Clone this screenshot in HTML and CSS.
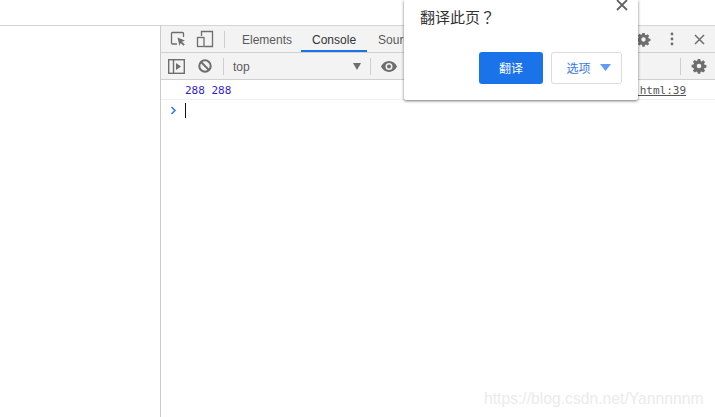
FILE: index.html
```html
<!DOCTYPE html>
<html lang="zh">
<head>
<meta charset="utf-8">
<title>Console</title>
<link rel="stylesheet" href="styles.css">
</head>
<body>
<div class="top"></div>
<div class="main">
  <div class="page"></div>
  <div class="devtools">
    <div class="tabs">
      <svg class="ic ic-insp" width="18" height="18" viewBox="0 0 18 18"><path d="M8 14H3.500a1 1 0 0 1-1-1V3.500a1 1 0 0 1 1-1h10a1 1 0 0 1 1 1V7" fill="none" stroke="#6e6e6e" stroke-width="1.300"/><path d="M8.500 7.500l7.500 3-3 1.200 2.800 2.800-1.300 1.300-2.800-2.800-1.200 3z" fill="#6e6e6e"/></svg>
      <svg class="ic ic-dev" width="18" height="18" viewBox="0 0 18 18"><path d="M5.500 6V1.500h11v15h-8" fill="none" stroke="#6e6e6e" stroke-width="1.300"/><rect x="1.500" y="7.500" width="6.500" height="9" fill="none" stroke="#6e6e6e" stroke-width="1.300"/></svg>
      <span class="sep tab-sep"></span>
      <span class="tab">Elements</span>
      <span class="tab active">Console</span>
      <span class="tab">Sources</span>
      <span class="fill"></span>
      <svg class="ic gear1" width="15" height="15" viewBox="0 0 16 16"><path class="gear" d="M6.700 1h2.600l.3 1.900 1.100.5 1.600-1.100 1.800 1.800-1.100 1.600.5 1.100 1.900.3v2.600l-1.900.3-.5 1.100 1.100 1.600-1.800 1.800-1.600-1.100-1.100.5-.3 1.900H6.700l-.3-1.900-1.100-.5-1.600 1.100-1.800-1.800 1.100-1.600-.5-1.100L.6 9.300V6.700l1.900-.3.5-1.100-1.100-1.600 1.800-1.800 1.600 1.100 1.100-.5zM8 5.700a2.300 2.300 0 1 0 0 4.600 2.300 2.300 0 0 0 0-4.600z"/></svg>
      <svg class="ic dots" width="4" height="14" viewBox="0 0 4 14"><circle cx="2" cy="2" r="1.400" fill="#6e6e6e"/><circle cx="2" cy="7" r="1.400" fill="#6e6e6e"/><circle cx="2" cy="12" r="1.400" fill="#6e6e6e"/></svg>
      <svg class="ic close1" width="11" height="11" viewBox="0 0 11 11"><path d="M1 1l9 9M10 1l-9 9" stroke="#6e6e6e" stroke-width="1.500"/></svg>
    </div>
    <div class="bar">
      <svg class="ic ic-side" width="17" height="15" viewBox="0 0 17 15"><rect x=".7" y=".7" width="15.600" height="13.600" fill="none" stroke="#6e6e6e" stroke-width="1.400"/><path d="M5.500 1v13" stroke="#6e6e6e" stroke-width="1.400"/><path d="M8 4l5 3.500L8 11z" fill="#6e6e6e"/></svg>
      <svg class="ic ic-block" width="14" height="14" viewBox="0 0 14 14"><circle cx="7" cy="7" r="5.700" fill="none" stroke="#6e6e6e" stroke-width="2"/><path d="M3 3l8 8" stroke="#6e6e6e" stroke-width="2"/></svg>
      <span class="sep"></span>
      <span class="ctx">top</span>
      <svg class="caret" width="8" height="7" viewBox="0 0 8 7"><path d="M0 0h8L4 7z" fill="#6e6e6e"/></svg>
      <span class="sep"></span>
      <svg class="ic ic-eye" width="16" height="11" viewBox="0 0 16 11"><path d="M8 0C4.500 0 1.500 2.200 0 5.500 1.500 8.800 4.500 11 8 11s6.500-2.200 8-5.500C14.500 2.200 11.500 0 8 0zm0 9a3.500 3.500 0 1 1 0-7 3.500 3.500 0 0 1 0 7zm0-5.500a2 2 0 1 0 0 4 2 2 0 0 0 0-4z" fill="#6e6e6e"/></svg>
      <span class="fill"></span>
      <span class="sep"></span>
      <svg class="ic gear2" width="16" height="16" viewBox="0 0 16 16"><path class="gear" d="M6.700 1h2.600l.3 1.900 1.100.5 1.600-1.100 1.800 1.800-1.100 1.600.5 1.100 1.900.3v2.600l-1.900.3-.5 1.100 1.100 1.600-1.800 1.800-1.600-1.100-1.100.5-.3 1.900H6.700l-.3-1.900-1.100-.5-1.600 1.100-1.800-1.800 1.100-1.600-.5-1.100L.6 9.300V6.700l1.900-.3.5-1.100-1.100-1.600 1.800-1.800 1.600 1.100 1.100-.5zM8 5.700a2.300 2.300 0 1 0 0 4.600 2.300 2.300 0 0 0 0-4.600z"/></svg>
    </div>
    <div class="log">
      <span class="val">288 288</span>
      <span class="src">index.html:39</span>
    </div>
    <div class="prompt">
      <svg width="7" height="9" viewBox="0 0 7 9"><path d="M1.500 1l3.500 3.500L1.500 8" fill="none" stroke="#367cf1" stroke-width="1.600"/></svg>
      <span class="cursor"></span>
    </div>
  </div>
</div>
<div class="bubble">
  <svg class="bubble-x" width="12" height="12" viewBox="0 0 12 12"><path d="M1 1l10 10M11 1L1 11" stroke="#5f6368" stroke-width="1.800"/></svg>
  <div class="title">翻译此页<span class="qm" lang="zh-TW">？</span></div>
  <div class="actions">
    <span class="btn primary">翻译</span>
    <span class="btn option">选项<svg class="opt-caret" width="11" height="7" viewBox="0 0 11 7"><path d="M0 0h11L5.500 7z" fill="#5f9cf5"/></svg></span>
  </div>
</div>
<div class="mark">https://blog.csdn.net/Yannnnnm</div>
</body>
</html>
```
FILE: styles.css
```css
* { box-sizing: border-box; }
html, body { margin: 0; height: 100%; overflow: hidden; background: #fff; }
body { position: relative; display: flex; flex-direction: column; width: 715px; height: 417px; font-family: "Liberation Sans", sans-serif; }
.top { height: 26px; flex: none; background: #fff; border-bottom: 1px solid #d4d4d4; }
.main { flex: 1; display: flex; min-height: 0; }
.page { width: 160px; flex: none; background: #fff; }
.devtools { flex: 1; border-left: 1px solid #cbcbcb; display: flex; flex-direction: column; min-width: 0; }
.tabs, .bar { display: flex; align-items: center; background: #f3f3f3; border-bottom: 1px solid #d0d0d0; flex: none; }
.tabs { height: 27px; padding-left: 8px; }
.bar { height: 27px; padding-left: 7px; }
.ic { flex: none; display: block; }
.ic-dev { margin-left: 9px; }
.sep { width: 1px; height: 17px; background: #cfcfcf; flex: none; }
.tab-sep { margin-left: 10px; }
.tab { font-size: 12px; color: #5a5a5a; height: 26px; line-height: 28px; padding: 0 11px; white-space: nowrap; }
.tab-sep + .tab { margin-left: 6px; }
.tab.active { color: #333; margin-left: -2px; box-shadow: inset 0 -2px 0 #1a73e8; }
.fill { flex: 1; }
.gear { fill: #6e6e6e; fill-rule: evenodd; }
.gear1 { margin-right: 19px; }
.dots { margin-right: 20px; }
.close1 { margin-right: 10px; }
.ic-block { margin-left: 13px; }
.bar .ic-block + .sep { margin-left: 11px; }
.ctx { font-size: 12px; line-height: 16px; padding-top: 2px; color: #5a5a5a; margin-left: 9px; width: 120px; }
.caret { flex: none; margin-right: 9px; }
.ic-eye { margin-left: 10px; }
.gear2 { margin: 0 8px 0 10px; }
.log { height: 20px; flex: none; display: flex; justify-content: space-between; align-items: center; padding: 1px 29px 0 24px; border-bottom: 1px solid #f0f0f0; font-family: "DejaVu Sans Mono", "Liberation Mono", monospace; font-size: 11px; }
.val { color: #2f1fd0; }
.src { color: #545454; text-decoration: underline; }
.prompt { display: flex; align-items: center; height: 20px; padding-left: 9px; }
.cursor { width: 1px; height: 15px; background: #111; margin-left: 8px; }
.bubble { position: absolute; left: 404px; top: 0; width: 234px; height: 100px; background: #fff; border-radius: 0 0 2px 2px; box-shadow: 0 1px 3px rgba(0,0,0,.55); padding: 7px 16px 0; }
.bubble-x { position: absolute; right: 10px; top: -1px; }
.title { font-family: "Noto Sans CJK SC", sans-serif; font-size: 15px; line-height: 20px; color: #333; }
.qm { font-family: "Noto Sans CJK TC", sans-serif; }
.actions { display: flex; justify-content: flex-end; gap: 8px; margin-top: 25px; }
.btn { height: 32px; border-radius: 3px; font-family: "Noto Sans CJK SC", sans-serif; font-size: 12px; line-height: 14px; padding-bottom: 1px; display: flex; align-items: center; justify-content: center; }
.primary { width: 64px; background: #1a73e8; color: #fff; }
.option { width: 71px; border: 1px solid #dadce0; color: #3b78e7; gap: 9px; padding-left: 4px; }
.mark { position: absolute; left: 484px; top: 390px; font-family: "Liberation Sans", sans-serif; font-size: 15.700px; color: #ebebeb; white-space: nowrap; }
```
